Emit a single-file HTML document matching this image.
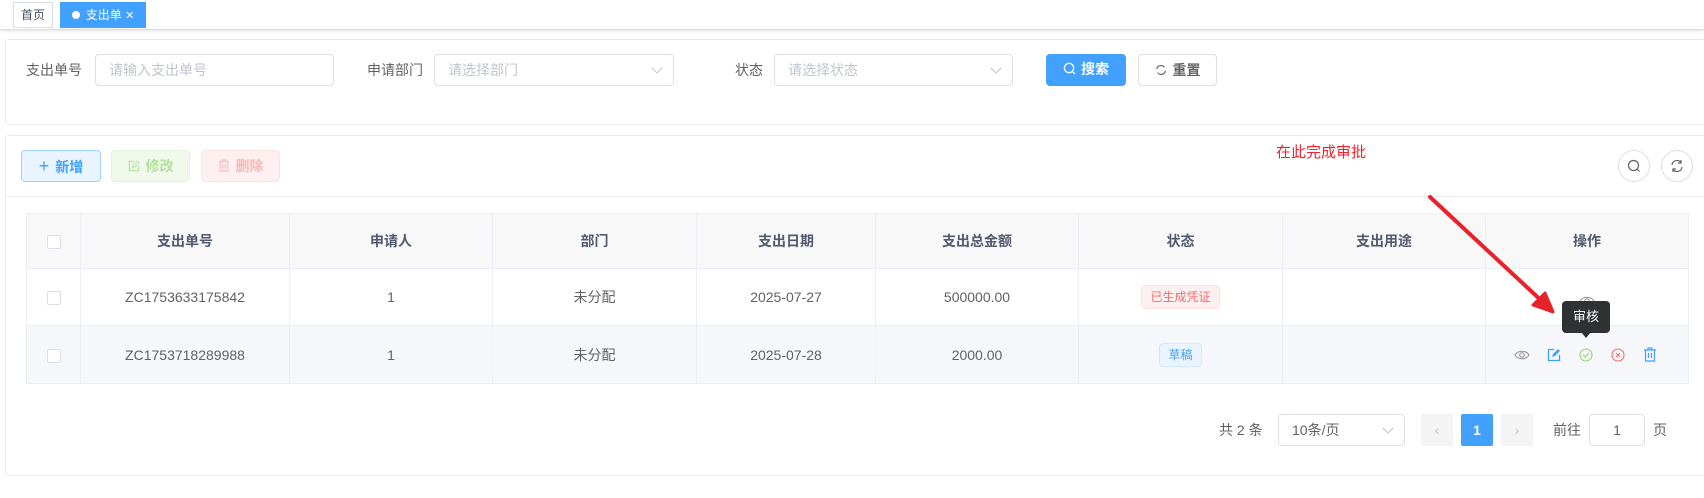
<!DOCTYPE html>
<html><head><meta charset="utf-8">
<style>
*{box-sizing:border-box;margin:0;padding:0}
body{width:1704px;height:498px;background:#fff;font-family:"Liberation Sans","Noto Sans CJK SC",sans-serif;font-size:14px;color:#606266;position:relative;overflow:hidden}
.abs{position:absolute}
.hdr{left:0;top:0;width:1704px;height:30px;border-bottom:1px solid #d8dce5;box-shadow:0 1px 3px rgba(0,0,0,.12)}
.tab{top:2px;height:26px;font-size:12px;line-height:24px;border:1px solid #d8dce5;color:#495060;white-space:nowrap;text-align:center}
.card{left:5px;width:1720px;border:1px solid #e6ebf5;border-radius:4px;background:#fff}
.lbl{font-size:14px;color:#606266;line-height:20px}
.inp{height:32px;border:1px solid #dcdfe6;border-radius:4px;font-size:14px;color:#c0c4cc;line-height:30px;padding-left:13px;white-space:nowrap}
.arr{position:absolute;right:12px;top:9px;width:8px;height:8px;border-right:1px solid #c0c4cc;border-bottom:1px solid #c0c4cc;transform:rotate(45deg)}
.btn{height:32px;border-radius:4px;font-size:14px;line-height:30px;text-align:center;font-weight:bold;white-space:nowrap}
table{border-collapse:collapse;position:absolute;left:26px;top:213px;width:1662px;table-layout:fixed}
td,th{border:1px solid #ebeef5;text-align:center;font-size:14px;vertical-align:middle}
th{background:#f8f8f9;color:#515a6e;height:55px;font-weight:bold}
td{color:#606266}
.cb{display:inline-block;width:14px;height:14px;border:1px solid #dcdfe6;border-radius:2px;background:#fff;vertical-align:middle}
.tag{display:inline-block;height:24px;line-height:22px;padding:0 8px;font-size:12px;border-radius:4px;border:1px solid}
.pg{top:414px;height:32px;line-height:32px}
</style></head><body>
<div class="abs hdr"></div>
<div class="abs tab" style="left:13px;width:40px">首页</div>
<div class="abs tab" style="left:60px;width:86px;background:#42a0ff;border-color:#42a0ff;color:#fff"><span style="display:inline-block;width:8px;height:8px;border-radius:50%;background:#fff;margin-right:6px;vertical-align:0"></span>支出单 <span style="font-size:11px">✕</span></div>

<div class="abs card" style="top:39px;height:86px"></div>
<div class="abs lbl" style="left:26px;top:60px">支出单号</div>
<div class="abs inp" style="left:95px;top:54px;width:239px">请输入支出单号</div>
<div class="abs lbl" style="left:367px;top:60px">申请部门</div>
<div class="abs inp" style="left:434px;top:54px;width:240px">请选择部门<i class="arr"></i></div>
<div class="abs lbl" style="left:735px;top:60px">状态</div>
<div class="abs inp" style="left:774px;top:54px;width:239px">请选择状态<i class="arr"></i></div>
<div class="abs btn" style="left:1046px;top:54px;width:80px;background:#42a0ff;color:#fff"><svg width="13" height="13" viewBox="0 0 14 14" style="vertical-align:-1px;margin-right:5px"><circle cx="6.5" cy="6.5" r="5" fill="none" stroke="#fff" stroke-width="1.4"/><path d="M10 10l3 3" stroke="#fff" stroke-width="1.4"/></svg>搜索</div>
<div class="abs btn" style="left:1138px;top:54px;width:79px;border:1px solid #dcdfe6;color:#606266"><svg width="12" height="12" viewBox="0 0 14 14" style="vertical-align:-1px;margin-right:6px"><path d="M2 6a5 5 0 0 1 9-2M12 8a5 5 0 0 1-9 2" fill="none" stroke="#606266" stroke-width="1.3"/></svg>重置</div>

<div class="abs card" style="top:135px;height:341px"></div>
<div class="abs" style="left:6px;top:196px;width:1700px;border-top:1px solid #e6ebf5"></div>
<div class="abs btn" style="left:21px;top:150px;width:80px;background:#e8f4ff;border:1px solid #a3d0fd;color:#42a0ff"><span style="font-weight:normal;font-size:18px;margin-right:6px">+</span>新增</div>
<div class="abs btn" style="left:111px;top:150px;width:79px;background:#f0f9eb;border:1px solid #e1f3d8;color:#b3e19d"><svg width="12" height="12" viewBox="0 0 14 14" style="vertical-align:-1px;margin-right:6px"><path d="M7 1.5H1.5v11h11V7" fill="none" stroke="#b3e19d" stroke-width="1.3"/><path d="M5 9l1-3 5-5 2 2-5 5z" fill="none" stroke="#b3e19d"/></svg>修改</div>
<div class="abs btn" style="left:201px;top:150px;width:79px;background:#fef0f0;border:1px solid #fde2e2;color:#fab6b6"><svg width="12" height="13" viewBox="0 0 14 15" style="vertical-align:-1px;margin-right:6px"><path d="M1 3h12M5 3V1h4v2M2.5 3v11h9V3M5.5 6v5M8.5 6v5" fill="none" stroke="#fab6b6" stroke-width="1.2"/></svg>删除</div>
<div class="abs" style="left:1276px;top:141px;color:#f5222d;font-size:15px">在此完成审批</div>
<div class="abs" style="left:1618px;top:150px;width:32px;height:32px;border:1px solid #dcdfe6;border-radius:50%"><svg width="30" height="30" viewBox="0 0 30 30"><circle cx="14.5" cy="14.5" r="5" fill="none" stroke="#606266" stroke-width="1.2"/><path d="M18 18l2.5 2.5" stroke="#606266" stroke-width="1.2"/></svg></div>
<div class="abs" style="left:1661px;top:150px;width:32px;height:32px;border:1px solid #dcdfe6;border-radius:50%"><svg width="30" height="30" viewBox="0 0 30 30"><path d="M10 14a5 5 0 0 1 9-2.5M20 16a5 5 0 0 1-9 2.5M19 9v3h-3M11 21v-3h3" fill="none" stroke="#606266" stroke-width="1.2"/></svg></div>

<table>
<colgroup><col style="width:54px"><col style="width:209px"><col style="width:203px"><col style="width:204px"><col style="width:179px"><col style="width:203px"><col style="width:204px"><col style="width:203px"><col style="width:203px"></colgroup>
<tr><th><span class="cb"></span></th><th>支出单号</th><th>申请人</th><th>部门</th><th>支出日期</th><th>支出总金额</th><th>状态</th><th>支出用途</th><th>操作</th></tr>
<tr style="height:57px"><td><span class="cb"></span></td><td>ZC1753633175842</td><td>1</td><td>未分配</td><td>2025-07-27</td><td>500000.00</td><td><span class="tag" style="background:#fef0f0;border-color:#fde2e2;color:#f56c6c">已生成凭证</span></td><td></td><td><svg width="16" height="12" viewBox="0 0 16 12" style="margin-top:10px"><path d="M1 6c3-5 11-5 14 0c-3 5-11 5-14 0z" fill="none" stroke="#909399"/><circle cx="8" cy="6" r="2.3" fill="none" stroke="#909399"/></svg></td></tr>
<tr style="height:58px;background:#f5f7fa"><td><span class="cb"></span></td><td>ZC1753718289988</td><td>1</td><td>未分配</td><td>2025-07-28</td><td>2000.00</td><td><span class="tag" style="background:#e8f4ff;border-color:#d1e9ff;color:#42a0ff">草稿</span></td><td></td><td></td></tr>
</table>
<svg class="abs" style="left:1514px;top:349px" width="16" height="12" viewBox="0 0 16 12"><path d="M1 6c3-5 11-5 14 0c-3 5-11 5-14 0z" fill="none" stroke="#909399"/><circle cx="8" cy="6" r="2.3" fill="none" stroke="#909399"/></svg>
<svg class="abs" style="left:1547px;top:348px" width="14" height="14" viewBox="0 0 14 14"><path d="M7 1.5H1.5v11h11V7" fill="none" stroke="#42a0ff" stroke-width="1.3"/><path d="M5 9l1-3 5-5 2 2-5 5z" fill="#42a0ff"/></svg>
<svg class="abs" style="left:1579px;top:348px" width="14" height="14" viewBox="0 0 14 14"><circle cx="7" cy="7" r="6" fill="none" stroke="#95d475" stroke-width="1.1"/><path d="M4 7l2 2 4-4" fill="none" stroke="#95d475" stroke-width="1.1"/></svg>
<svg class="abs" style="left:1611px;top:348px" width="14" height="14" viewBox="0 0 14 14"><circle cx="7" cy="7" r="6" fill="none" stroke="#f56c6c" stroke-width="1.1"/><path d="M5 5l4 4M9 5l-4 4" stroke="#f56c6c" stroke-width="1.1"/></svg>
<svg class="abs" style="left:1643px;top:347px" width="14" height="15" viewBox="0 0 14 15"><path d="M1 3h12M5 3V1h4v2M2.5 3v11h9V3M5.5 6v5M8.5 6v5" fill="none" stroke="#42a0ff" stroke-width="1.2"/></svg>
<div class="abs" style="left:1562px;top:301px;width:48px;height:32px;background:#303133;border-radius:4px;color:#fff;font-size:13px;line-height:32px;text-align:center">审核</div>
<div class="abs" style="left:1581px;top:332px;width:0;height:0;border-left:5px solid transparent;border-right:5px solid transparent;border-top:6px solid #303133"></div>
<svg class="abs" style="left:0;top:0" width="1704" height="498"><path d="M1430 197L1545 304" stroke="#e8222a" stroke-width="4" stroke-linecap="round"/><path d="M1553 312L1533 305L1545 293z" fill="#e8222a" stroke="#e8222a" stroke-width="3" stroke-linejoin="round"/></svg>

<div class="abs pg" style="left:1219px">共 2 条</div>
<div class="abs inp pg" style="left:1278px;width:127px;color:#606266;line-height:30px">10条/页<i class="arr"></i></div>
<div class="abs pg" style="left:1421px;width:32px;background:#f4f4f5;border-radius:2px;text-align:center;color:#c0c4cc">‹</div>
<div class="abs pg" style="left:1461px;width:32px;background:#42a0ff;border-radius:2px;text-align:center;color:#fff;font-weight:bold">1</div>
<div class="abs pg" style="left:1501px;width:32px;background:#f4f4f5;border-radius:2px;text-align:center;color:#c0c4cc">›</div>
<div class="abs pg" style="left:1553px">前往</div>
<div class="abs inp pg" style="left:1589px;width:56px;color:#606266;text-align:center;padding:0;line-height:30px">1</div>
<div class="abs pg" style="left:1653px">页</div>
</body></html>
